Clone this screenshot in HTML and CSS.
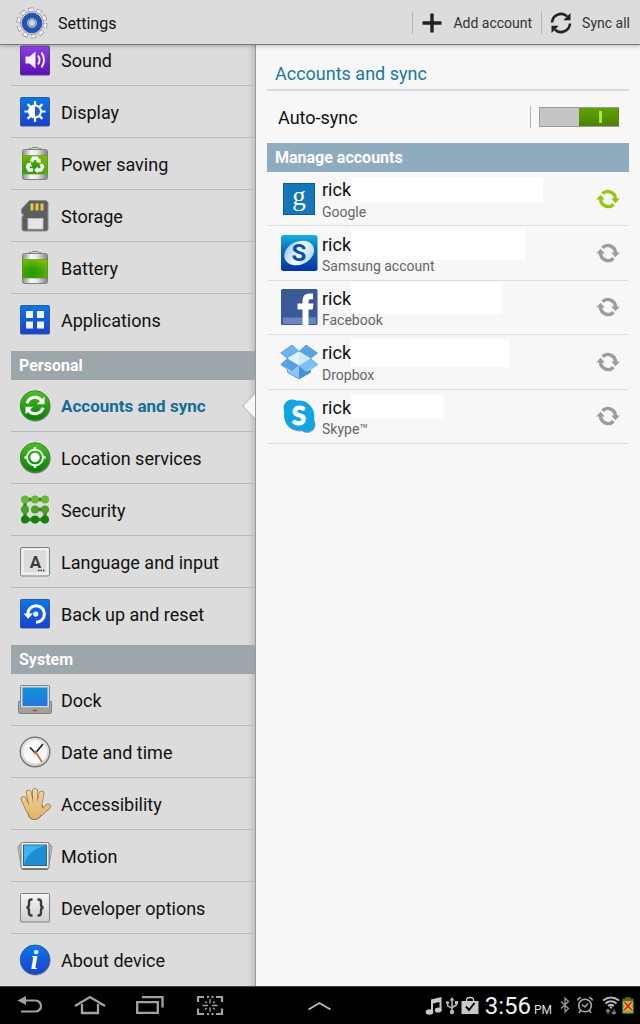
FILE: index.html
```html
<!DOCTYPE html>
<html lang="en">
<head>
<meta charset="utf-8">
<meta name="viewport" content="width=device-width, initial-scale=1">
<title>Settings</title>
<link rel="stylesheet" href="styles.css">
</head>
<body>
<svg class="defs" aria-hidden="true">
  <defs>
    <linearGradient id="blue" x1="0" y1="0" x2="0" y2="1"><stop offset="0" stop-color="#0b79e6"/><stop offset="1" stop-color="#1a3fd0"/></linearGradient>
    <linearGradient id="purple" x1="0" y1="0" x2="0" y2="1"><stop offset="0" stop-color="#8a3fe0"/><stop offset="1" stop-color="#5c0fb4"/></linearGradient>
    <linearGradient id="green" x1="0" y1="0" x2="0" y2="1"><stop offset="0" stop-color="#4fc02a"/><stop offset="1" stop-color="#057f05"/></linearGradient>
    <radialGradient id="charge" cx=".4" cy=".75" r=".85"><stop offset="0" stop-color="#1f9a0c"/><stop offset=".35" stop-color="#37a208"/><stop offset="1" stop-color="#86bf00"/></radialGradient>
    <linearGradient id="metal" x1="0" y1="0" x2="1" y2="0"><stop offset="0" stop-color="#8d8d8d"/><stop offset=".35" stop-color="#fafafa"/><stop offset=".6" stop-color="#e4e4e4"/><stop offset="1" stop-color="#7f7f7f"/></linearGradient>
    <linearGradient id="pale" x1="0" y1="0" x2="0" y2="1"><stop offset="0" stop-color="#f6f6f6"/><stop offset="1" stop-color="#cfcfcf"/></linearGradient>
    <linearGradient id="screen" x1="0" y1="0" x2="0" y2="1"><stop offset="0" stop-color="#1393d6"/><stop offset="1" stop-color="#1f78e0"/></linearGradient>
    <linearGradient id="skin" x1="0" y1="0" x2="0" y2="36" gradientUnits="userSpaceOnUse"><stop offset="0" stop-color="#f3d9a4"/><stop offset="1" stop-color="#dfae62"/></linearGradient>
    <linearGradient id="samsung" x1="0" y1="0" x2="0" y2="1"><stop offset="0" stop-color="#12b4dc"/><stop offset=".4" stop-color="#0a6cc4"/><stop offset="1" stop-color="#0635a0"/></linearGradient>
    <linearGradient id="oval" x1="0" y1="0" x2="1" y2="1"><stop offset="0" stop-color="#7fc4ee"/><stop offset=".5" stop-color="#f3faff"/><stop offset="1" stop-color="#9fd0f0"/></linearGradient>
    <symbol id="sync" viewBox="0 0 24 20">
      <path d="M6.500 4.800 A7.500 7.500 0 0 1 19.400 10.200" fill="none" stroke="currentColor" stroke-width="3.400"/>
      <path d="M15.200 9.500h8.600l-4.300 4.800z" fill="currentColor"/>
      <path d="M17.500 15.200 A7.500 7.500 0 0 1 4.600 9.800" fill="none" stroke="currentColor" stroke-width="3.400"/>
      <path d="M8.800 10.500h-8.600l4.300-4.800z" fill="currentColor"/>
    </symbol>
    <symbol id="battery" viewBox="0 0 36 36">
      <path d="M12 4V2.500h2L15 1.500h6l1 1h2V4" fill="#d5d5d5" stroke="#888"/>
      <rect x="5.500" y="3.500" width="25" height="30" rx="2" fill="url(#metal)" stroke="#808080"/>
      <rect x="5.500" y="9.500" width="25" height="18.500" fill="url(#charge)" stroke="#5c9409" stroke-width=".6"/>
    </symbol>
  </defs>
</svg>

<header class="topbar">
  <svg class="topbar-logo" viewBox="0 0 32 32" aria-hidden="true">
    <circle cx="16" cy="16" r="13.500" fill="none" stroke="#858b92" stroke-width="4" stroke-dasharray="5.200 3.280"/>
    <circle cx="16" cy="16" r="13.300" fill="none" stroke="#f4f4f4" stroke-width="3" stroke-dasharray="4.200 4.160" stroke-dashoffset="-.5"/>
    <circle cx="16" cy="16" r="11.500" fill="#e5e6e8" stroke="#9a9fa6"/>
    <circle cx="16" cy="16" r="7.300" fill="#e8edf4" stroke="#2453b2" stroke-width="5"/>
    <circle cx="16" cy="16" r="9.900" fill="none" stroke="#173d87" stroke-width=".8"/>
    <circle cx="16" cy="16" r="3.700" fill="#ced6df" stroke="#8798ae" stroke-width="1.600"/>
  </svg>
  <h1 class="topbar-title">Settings</h1>
  <button class="action" type="button">
    <svg class="action-icon" viewBox="0 0 22 22" aria-hidden="true"><path d="M11 1.500v19M1.500 11h19" stroke="#222" stroke-width="3.400"/></svg>
    Add account
  </button>
  <button class="action" type="button">
    <svg class="action-icon" viewBox="0 0 22 22" aria-hidden="true">
      <path d="M2 10.500A9 9 0 0 1 17 4.300M20 11.500A9 9 0 0 1 5 17.700" fill="none" stroke="#222" stroke-width="2.600"/>
      <path d="M20.500 1v7.200h-7.200zM1.500 21v-7.200h7.200z" fill="#222"/>
    </svg>
    Sync all
  </button>
</header>

<main class="panes">
  <nav class="sidebar" aria-label="Settings sections">
    <ul class="menu">
      <li><a class="item" href="#sound"><svg class="item-icon" viewBox="0 0 36 36"><rect x="3.500" y="4" width="29" height="29" rx="1" fill="url(#purple)" stroke="#5a3a80"/><path d="M8.500 14.500h4l6-5v17l-6-5h-4z" fill="#f3eef8"/><path d="M21 13.500q3 4.500 0 9M24.500 10.500q5 7.500 0 15" fill="none" stroke="#f3eef8" stroke-width="1.900"/></svg>Sound</a></li>
      <li><a class="item" href="#display"><svg class="item-icon" viewBox="0 0 36 36"><rect x="3.500" y="3.500" width="29" height="28.500" rx="1" fill="url(#blue)" stroke="#31589a"/><g stroke="#fff" stroke-width="2.200"><path d="M18 7v4M18 24v4M7.500 17.500h4M24.500 17.500h4M10.600 10.100l2.800 2.800M22.600 22.100l2.800 2.800M10.600 24.900l2.800-2.800M22.600 12.900l2.800-2.800"/></g><circle cx="18" cy="17.500" r="6" fill="#1d5fdb" stroke="#fff" stroke-width="2"/><path d="M18 11.500a6 6 0 0 0 0 12z" fill="#fff"/></svg>Display</a></li>
      <li><a class="item" href="#power"><svg class="item-icon" viewBox="0 0 36 36"><use href="#battery"/><g fill="none" stroke="#fff" stroke-width="3.400"><path d="M14.200 15.700l2.200-3.500h3.400l1.800 3"/><path d="M24 18l1.600 3-1.800 3h-4"/><path d="M16 24h-3.800l-1.700-3 1.600-2.800"/></g><path d="M23.500 12.500l.3 4.800-4.700-1.200zM20.800 20.500v7l-3.800-3.500zM9 18.300l4.600-2 1.200 4.600z" fill="#fff"/></svg>Power saving</a></li>
      <li><a class="item" href="#storage"><svg class="item-icon" viewBox="0 0 36 36"><path d="M12.500 2.500h16.500l2 2v27l-1.500 1.500H6.500L5 31.500V19l1.500-2-2-2v-4z" fill="#5e5e5e" stroke="#8b8b8b"/><path d="M15 5.500v7M20 5.500v7M25 5.500v7" stroke="#ecc63f" stroke-width="3"/><rect x="11" y="20.500" width="15" height="10.500" fill="#e6e6e6" stroke="#bcbcbc"/></svg>Storage</a></li>
      <li><a class="item" href="#battery-info"><svg class="item-icon" viewBox="0 0 36 36"><use href="#battery"/></svg>Battery</a></li>
      <li><a class="item" href="#applications"><svg class="item-icon" viewBox="0 0 36 36"><rect x="3.500" y="3.500" width="29" height="28.500" rx="1" fill="url(#blue)" stroke="#31589a"/><path d="M9 9h7v7H9zM20 9h7v7h-7zM9 19.500h7v7H9zM20 19.500h7v7h-7z" fill="#f1f4fb"/></svg>Applications</a></li>
    </ul>
    <h2 class="section-title">Personal</h2>
    <ul class="menu">
      <li><a class="item item-active" href="#accounts" aria-current="page"><svg class="item-icon" viewBox="0 0 36 36"><circle cx="18.300" cy="18.300" r="15.300" fill="#777"/><circle cx="18" cy="17.500" r="14.700" fill="url(#green)" stroke="#3b8a2a"/><path d="M10 15.300A8.300 8.300 0 0 1 24.500 12.500M26 19.700A8.300 8.300 0 0 1 11.500 22.500" fill="none" stroke="#fff" stroke-width="3"/><path d="M27.500 8.800v7.400h-7.700zM8.500 26.200v-7.400h7.700z" fill="#fff"/></svg>Accounts and sync<svg class="pointer" viewBox="0 0 13 28" aria-hidden="true"><path d="M13 .5L1 12.500q-1 1.500 0 3L13 27.500z" fill="#f7f7f7"/><path d="M13 .5L1 12.500q-1 1.500 0 3L13 27.500" fill="none" stroke="#aaa"/></svg></a></li>
      <li><a class="item" href="#location"><svg class="item-icon" viewBox="0 0 36 36"><circle cx="18.300" cy="18.300" r="15.300" fill="#777"/><circle cx="18" cy="17.500" r="14.700" fill="url(#green)" stroke="#3b8a2a"/><circle cx="18" cy="17.500" r="8" fill="none" stroke="#fff" stroke-width="1.800"/><circle cx="18" cy="17.500" r="4.700" fill="#fff"/><path d="M18 7v3.500M18 24.500V28M7.500 17.500H11M25 17.500h3.500" stroke="#fff" stroke-width="2.400"/></svg>Location services</a></li>
      <li><a class="item" href="#security"><svg class="item-icon" viewBox="0 0 36 36"><path d="M28 7.500H8v20h20v-10H18" fill="none" stroke="#318a1c" stroke-width="3.400"/><g fill="#4a9f27"><circle cx="8" cy="7.500" r="4" fill="#68b92f"/><circle cx="18" cy="7.500" r="4" fill="#68b92f"/><circle cx="28" cy="7.500" r="4" fill="#68b92f"/><circle cx="8" cy="17.500" r="4"/><circle cx="18" cy="17.500" r="4"/><circle cx="28" cy="17.500" r="4"/><circle cx="8" cy="27.500" r="4" fill="#128009"/><circle cx="18" cy="27.500" r="4" fill="#128009"/><circle cx="28" cy="27.500" r="4" fill="#128009"/></g></svg>Security</a></li>
      <li><a class="item" href="#language"><svg class="item-icon" viewBox="0 0 36 36"><rect x="3.500" y="3.500" width="29" height="28.500" rx="1.500" fill="#e9e9e9" stroke="#808080"/><rect x="6" y="5.500" width="24" height="23.500" fill="#dcdcdc" stroke="#f8f8f8"/><text class="glyph" x="18.500" y="23.500" font-size="17" fill="#3c3c3c">A</text><path d="M21 26.500h7" stroke="#333" stroke-width="1.500" stroke-dasharray="1.500 1"/></svg>Language and input</a></li>
      <li><a class="item" href="#backup"><svg class="item-icon" viewBox="0 0 36 36"><rect x="3.500" y="3.500" width="29" height="28.500" rx="1" fill="url(#blue)" stroke="#31589a"/><path d="M10.800 18A8.300 8.300 0 1 1 19 26.300" fill="none" stroke="#fff" stroke-width="3"/><path d="M6.500 17.500h9.500l-4.800 5.300z" fill="#fff"/><circle cx="18.800" cy="18" r="2.600" fill="#fff"/></svg>Back up and reset</a></li>
    </ul>
    <h2 class="section-title">System</h2>
    <ul class="menu">
      <li><a class="item" href="#dock"><svg class="item-icon" viewBox="0 0 36 36"><path d="M1.500 19.500h4v-1h25v1h4v11l-1 1h-31l-1-1z" fill="#aaa" stroke="#808080"/><rect x="3.500" y="3.500" width="29" height="22.500" rx="1" fill="#d9d9d9" stroke="#858585"/><rect x="5.500" y="5.500" width="25" height="18.500" fill="url(#screen)"/><path d="M2 26.500h32v4.500H2z" fill="#a0a0a0"/><path d="M16 28.500h4" stroke="#b8382a" stroke-width="1.400"/></svg>Dock</a></li>
      <li><a class="item" href="#date"><svg class="item-icon" viewBox="0 0 36 36"><circle cx="18" cy="18" r="14.800" fill="url(#pale)" stroke="#777" stroke-width="1.400"/><circle cx="18" cy="17.700" r="12.500" fill="#f7f7f7" stroke="#d5d5d5"/><path d="M13 13.500l5.500 5.500 7.500-9" fill="none" stroke="#222" stroke-width="1.700"/><path d="M18 17l7 11" stroke="#d9622b" stroke-width="1.600"/><circle cx="18" cy="18.300" r="1.500" fill="#d9622b"/></svg>Date and time</a></li>
      <li><a class="item" href="#accessibility"><svg class="item-icon" viewBox="0 0 36 36">
        <g fill="none" stroke="#8a7044" stroke-width="5.600" stroke-linecap="round" stroke-linejoin="round"><path d="M6.500 13l5 11M11.800 6.500l2.700 14M18 5l.3 14M24.500 7.500L22 20M31 20.500L24 27"/></g>
        <path d="M10.500 20L24.500 18l3 6-3.500 6q-2 3.500-7 3.500-5 0-6-6z" fill="#8a7044" stroke="#8a7044"/>
        <g fill="none" stroke="url(#skin)" stroke-width="4.300" stroke-linecap="round" stroke-linejoin="round"><path d="M6.500 13l5 11M11.800 6.500l2.700 14M18 5l.4 14M24.500 7.500L22 20M31 20.500L24 27"/></g>
        <path d="M10.500 20L24 18.500l2.500 6-3.300 5.500q-2 3-6.200 3-4.500 0-5.500-5.500z" fill="url(#skin)"/></svg>Accessibility</a></li>
      <li><a class="item" href="#motion"><svg class="item-icon" viewBox="0 0 36 36"><path d="M.8 8.500l4-1.500v24zM35.200 8.500l-4-1.500v24z" fill="#eee" stroke="#8f8f8f"/><path d="M2.500 6.500l2-1v25zM33.500 6.500l-2-1v25z" fill="#ddd" stroke="#999"/><rect x="4" y="4.500" width="28" height="26" rx="1.500" fill="#f0f0f0" stroke="#7f7f7f"/><path d="M5 31.500h26" stroke="#777"/><rect x="6.500" y="7" width="23" height="20.500" fill="#1b8ed6" stroke="#25689b"/><path d="M7 26V7.500h22Q12 11 7 26z" fill="#42b3ee"/></svg>Motion</a></li>
      <li><a class="item" href="#developer"><svg class="item-icon" viewBox="0 0 36 36"><rect x="3.500" y="3.500" width="29" height="28.500" rx="1" fill="url(#pale)" stroke="#808080"/><path d="M15.500 9.500h-1q-2.500 0-2.500 2.500v2.500q0 2.800-2.500 3 2.500.2 2.500 3V23q0 2.500 2.500 2.500h1M20.500 9.500h1q2.500 0 2.500 2.500v2.500q0 2.800 2.500 3-2.500.2-2.500 3V23q0 2.500-2.500 2.500h-1" fill="none" stroke="#3b3b3b" stroke-width="2.400"/></svg>Developer options</a></li>
      <li><a class="item" href="#about"><svg class="item-icon" viewBox="0 0 36 36"><circle cx="18.300" cy="18.300" r="15.300" fill="#888"/><circle cx="18" cy="17.700" r="14.700" fill="url(#blue)" stroke="#2b5aa6"/><text class="glyph-serif" x="17.500" y="26.500" font-size="28" fill="#fff">i</text></svg>About device</a></li>
    </ul>
  </nav>

  <section class="detail">
    <h2 class="detail-title">Accounts and sync</h2>
    <div class="setting">
      <label for="auto-sync">Auto-sync</label>
      <span class="setting-control"><input class="toggle" id="auto-sync" type="checkbox" role="switch" checked></span>
    </div>
    <h3 class="accounts-title">Manage accounts</h3>
    <ul class="accounts">
      <li><a class="account" href="#google">
        <svg class="account-icon" viewBox="0 0 38 38"><rect x="3.500" y="3.500" width="31" height="31" fill="#1577bb" stroke="#0c5f9b"/><text class="glyph-book" x="19" y="25" font-size="27" fill="#fff">g</text></svg>
        <span class="account-text"><span class="account-name">rick<span class="mask mask-google"></span></span><span class="account-type">Google</span></span>
        <svg class="sync-state sync-on"><use href="#sync"/></svg></a></li>
      <li><a class="account" href="#samsung-account">
        <svg class="account-icon" viewBox="0 0 38 38"><rect x="1" y="1" width="36.500" height="36" rx="2.500" fill="url(#samsung)"/><ellipse cx="19.200" cy="19" rx="15.500" ry="11.500" transform="rotate(-25 19.200 19)" fill="url(#oval)"/><text class="glyph" x="19" y="27" font-size="24" fill="#0b4fae">S</text></svg>
        <span class="account-text"><span class="account-name">rick<span class="mask mask-samsung"></span></span><span class="account-type">Samsung account</span></span>
        <svg class="sync-state"><use href="#sync"/></svg></a></li>
      <li><a class="account" href="#facebook">
        <svg class="account-icon" viewBox="0 0 38 38"><rect x="1" y="1" width="36.500" height="36" rx="1.500" fill="#3b5998"/><path d="M3 29.500h33V36H3z" fill="#6c86bd"/><path d="M22.500 37V21.500h-5v-6h5v-3q0-7 7-7H33v5.800h-2.500q-2 0-2 2v2.200h5l-.8 6h-4.200V37z" fill="#fff"/></svg>
        <span class="account-text"><span class="account-name">rick<span class="mask mask-facebook"></span></span><span class="account-type">Facebook</span></span>
        <svg class="sync-state"><use href="#sync"/></svg></a></li>
      <li><a class="account" href="#dropbox">
        <svg class="account-icon" viewBox="0 0 38 38"><path d="M12 2l7 6.500-11.500 7L.8 10z" fill="#6fb4ee"/><path d="M26 2l-7 6.500 11.500 7L37.500 10z" fill="#5aa2e4"/><path d="M7.500 15.500L19 8.500l11.500 7L19 22.500z" fill="#e3f3ff"/><path d="M19 8.500l11.500 7L19 22.500z" fill="#cce8fd"/><path d="M.8 21.500l6.700-6 11.500 7-7 6z" fill="#55a0e6"/><path d="M37.500 21.500l-7-6-11.500 7 7 6z" fill="#7cc0f5"/><path d="M7.500 26.500v3L19 36V22.500l-7 6z" fill="#8bc6f4"/><path d="M30.500 26.500v3L19 36V22.500l7 6z" fill="#4691dc"/><path d="M12 2l7 6.500L26 2l11.500 8-7 5.500 7 6-7 5v3L19 36 7.500 29.500v-3l-6.700-5 6.700-6L.8 10z" fill="none" stroke="#4189cc" stroke-width=".7"/></svg>
        <span class="account-text"><span class="account-name">rick<span class="mask mask-dropbox"></span></span><span class="account-type">Dropbox</span></span>
        <svg class="sync-state"><use href="#sync"/></svg></a></li>
      <li><a class="account" href="#skype">
        <svg class="account-icon" viewBox="0 0 38 38"><g fill="#999" transform="translate(.5 1)"><circle cx="19" cy="18.500" r="15"/><circle cx="12" cy="11" r="8.500"/><circle cx="26.500" cy="26.500" r="8.500"/></g><g fill="#12a5e4"><circle cx="19" cy="18.500" r="15"/><circle cx="12" cy="11" r="8.500"/><circle cx="26.500" cy="26.500" r="8.500"/></g><text class="glyph-round" x="19" y="27.500" font-size="26" fill="#fff" stroke="#fff" stroke-width=".8">S</text></svg>
        <span class="account-text"><span class="account-name">rick<span class="mask mask-skype"></span></span><span class="account-type">Skype™</span></span>
        <svg class="sync-state"><use href="#sync"/></svg></a></li>
    </ul>
  </section>
</main>

<footer class="navbar">
  <div class="nav-keys">
    <button class="key" type="button" aria-label="Back"><svg viewBox="0 0 32 24"><path d="M9 6.500h12.500a5.200 5.200 0 0 1 0 11H7" fill="none" stroke="#a2a2a2" stroke-width="2.200"/><path d="M3.500 6.500L12 2v9z" fill="#a2a2a2"/></svg></button>
    <button class="key" type="button" aria-label="Home"><svg viewBox="0 0 32 24"><path d="M1 12L16 3l15 9M8 10v9h16v-9" fill="none" stroke="#a2a2a2" stroke-width="2.300"/></svg></button>
    <button class="key" type="button" aria-label="Recent apps"><svg viewBox="0 0 32 24"><path d="M3.200 8.200h20.600v10.600H3.200zM8 3.200h20.500v10.300" fill="none" stroke="#a2a2a2" stroke-width="2.300"/></svg></button>
    <button class="key" type="button" aria-label="Screenshot"><svg viewBox="0 0 32 24"><path d="M4 8V3h6M13 3h2M17.500 3h2M22 3h6v5M4 14.500V20h6M13 20h2M17.500 20h2M22 20h6v-5.500" fill="none" stroke="#a2a2a2" stroke-width="2.200"/><path d="M16 5v4.500M16 13.500V18M8.500 11.500H14M18 11.500h5.500M11 7.500l2 1.500M21 7.500L19 9M11 15.500l2-1.500M21 15.500L19 14" stroke="#a2a2a2" stroke-width="1.300"/></svg></button>
  </div>
  <button class="key key-up" type="button" aria-label="Open tray"><svg viewBox="0 0 32 24"><path d="M4.500 15.500L15.500 9l11 6.500" fill="none" stroke="#bbb" stroke-width="1.800"/></svg></button>
  <div class="status">
    <svg class="status-icon" viewBox="0 0 18 20"><path d="M6 3.500L16.500 1v13.500h-2V6L8 7.500v9H6z" fill="#c8c8c8"/><ellipse cx="4.500" cy="16" rx="3.800" ry="2.700" fill="#c8c8c8"/><ellipse cx="13.200" cy="14" rx="3.400" ry="2.600" fill="#c8c8c8"/></svg>
    <svg class="status-icon status-narrow" viewBox="0 0 14 20"><path d="M7 3v12M2.500 7v2.500L7 12.500M11.500 7v2L7 11.500" fill="none" stroke="#bbb" stroke-width="1.500"/><path d="M4.500 4.500L7 1l2.500 3.500z" fill="#bbb"/><circle cx="7" cy="16" r="2.200" fill="#bbb"/><circle cx="2.500" cy="6.500" r="1.600" fill="#bbb"/><path d="M10 5h3v3h-3z" fill="#bbb"/></svg>
    <svg class="status-icon" viewBox="0 0 18 20"><path d="M5.500 5.500V4Q5.500 1.500 9 1.500T12.500 4v1.500" fill="none" stroke="#c8c8c8" stroke-width="1.300"/><path d="M.5 5h17v13H.5z" fill="#c8c8c8"/><path d="M5 10.500l3 3.500 5.500-7" fill="none" stroke="#000" stroke-width="2"/></svg>
    <span class="time"><time class="clock">3:56</time><span class="meridiem">PM</span></span>
    <svg class="status-icon status-bluetooth" viewBox="0 0 10 20"><path d="M1 5.500l7.500 7L5 16V2l3.500 3.500L1 12.500" fill="none" stroke="#999" stroke-width="1.300"/></svg>
    <svg class="status-icon status-alarm" viewBox="0 0 18 20"><circle cx="9" cy="9.500" r="6.300" fill="none" stroke="#aaa" stroke-width="1.600"/><path d="M6 8.500L9 11l3-3.500M4.500 14.500L3 17M13.500 14.500l1.500 2.500M1.500 4.500Q2 2 5 1.500M16.500 4.500Q16 2 13 1.500" fill="none" stroke="#aaa" stroke-width="1.500"/></svg>
    <svg class="status-icon" viewBox="0 0 18 20"><path d="M1 4.500Q9-1.500 17 4.500M3.500 7.300q5.500-4 11 0M6 10q3-2.200 6 0" fill="none" stroke="#b5b5b5" stroke-width="2.100"/><circle cx="9" cy="11.500" r="1.200" fill="#b5b5b5"/><path d="M6 18v-4.500M4 15.500l2-2 2 2M12 13.500V18M10 16l2 2 2-2" fill="none" stroke="#888" stroke-width="1.300"/></svg>
    <svg class="status-icon status-battery" viewBox="0 0 12 20"><path d="M3.500 1h5v2h-5zM.5 2.500h11V6H.5z" fill="#536c20"/><path d="M.5 5h11v12.500H.5z" fill="#8aaf16"/><path d="M2.500 6l7 8M9.500 6l-7 8" stroke="#f2e3cc" stroke-width="3.600"/><path d="M2.500 6l7 8M9.500 6l-7 8" stroke="#e1341c" stroke-width="2.400"/></svg>
  </div>
</footer>
</body>
</html>
```
FILE: styles.css
```css
* {
  box-sizing: border-box;
}

body {
  display: flex;
  flex-direction: column;
  height: 100vh;
  margin: 0;
  background: #f7f7f7;
  color: #111;
  font-family: Roboto, "Liberation Sans", sans-serif;
}

h1, h2, h3, ul {
  margin: 0;
  padding: 0;
  font-weight: 400;
}

ul {
  list-style: none;
}

a {
  color: inherit;
  text-decoration: none;
}

button {
  padding: 0;
  border: 0;
  background: none;
  color: inherit;
  font: inherit;
}

svg {
  flex: none;
}

.defs {
  position: absolute;
  width: 0;
  height: 0;
}

/* Top bar */
.topbar {
  position: relative;
  display: flex;
  flex: none;
  align-items: center;
  height: 45px;
  padding: 2px 10px 0 16px;
  border-bottom: 1px solid #777;
  background: #dcdcdc;
  box-shadow: 0 1px 4px rgba(0, 0, 0, 0.25);
}

.topbar-logo {
  width: 32px;
  height: 32px;
}

.topbar-title {
  flex: 1;
  padding-left: 10px;
  font-size: 16px;
}

.action {
  display: flex;
  gap: 10px;
  align-items: center;
  height: 22px;
  margin-left: 9px;
  padding-left: 8px;
  border-left: 1px solid #b5b5b5;
  color: #333;
  font-size: 14px;
  white-space: nowrap;
}

.action-icon {
  width: 22px;
  height: 22px;
}

/* Two panes */
.panes {
  display: grid;
  flex: 1;
  grid-template-columns: 2fr 3fr;
  min-height: 0;
}

/* The list is scrolled to its end, so its top runs under the bar */
.sidebar {
  display: flex;
  flex-direction: column;
  justify-content: flex-end;
  min-width: 0;
  padding-left: 11px;
  overflow: hidden;
  border-right: 1px solid #999;
  background: linear-gradient(to left, #c2c2c2, #dcdcdc 7px);
}

.menu li {
  height: 52px;
  border-bottom: 1px solid #bababa;
}

.menu li:last-child {
  border-bottom: 0;
}

.item {
  position: relative;
  display: flex;
  gap: 8px;
  align-items: center;
  height: 51px;
  padding: 1px 0 0 6px;
  font-size: 18px;
  white-space: nowrap;
}

.item-icon {
  width: 36px;
  height: 36px;
}

.item-active {
  color: #146d98;
  font-size: 17px;
  font-weight: 700;
}

.pointer {
  position: absolute;
  top: 12px;
  right: -1px;
  width: 13px;
  height: 28px;
}

.section-title {
  margin-top: 5px;
  padding-left: 8px;
  background: #9da6ab;
  color: #fff;
  font-size: 16px;
  font-weight: 700;
  line-height: 29px;
}

.glyph, .glyph-serif, .glyph-book, .glyph-round {
  font-family: Roboto, sans-serif;
  font-weight: 700;
  text-anchor: middle;
}

.glyph-serif {
  font-family: "Liberation Serif", serif;
  font-style: italic;
}

.glyph-book {
  font-family: "Liberation Serif", serif;
  font-weight: 400;
}

.glyph-round {
  font-family: Lato, sans-serif;
  font-weight: 900;
}

/* Detail pane */
.detail {
  min-width: 0;
  padding: 14px 11px 0;
}

.detail-title {
  padding-left: 8px;
  border-bottom: 2px solid #d3dade;
  color: #1c789f;
  font-size: 18px;
  line-height: 30px;
}

.setting {
  display: flex;
  align-items: center;
  justify-content: space-between;
  height: 52px;
  padding: 0 10px 0 11px;
  font-size: 18px;
}

.setting-control {
  display: flex;
  align-items: center;
  height: 22px;
  padding-left: 8px;
  border-left: 1px solid #b5b5b5;
}

.toggle {
  width: 80px;
  height: 20px;
  margin: 0;
  border: 1px solid #9b9b9b;
  border-radius: 1px;
  background: #c5c5c5;
  appearance: none;
}

.toggle:checked {
  border-right-color: #5a8410;
  background:
    linear-gradient(#a6e83c, #a6e83c) 59px 50% / 3px 12px no-repeat,
    linear-gradient(#62a303, #4d8103) right / 39px 100% no-repeat,
    #c5c5c5;
}

.accounts-title {
  padding-left: 8px;
  background: #8facbf;
  color: #fff;
  font-size: 16px;
  font-weight: 700;
  line-height: 29px;
}

.accounts {
  display: grid;
  grid-auto-rows: 1fr;
  min-height: 272px;
}

.accounts li {
  display: grid;
  border-bottom: 1px solid #dedede;
}

.account {
  display: flex;
  gap: 4px;
  align-items: center;
  padding: 0 9px 0 13px;
}

.account-icon {
  width: 38px;
  height: 38px;
}

.account-text {
  display: flex;
  flex: 1;
  flex-direction: column;
  min-width: 0;
  padding-top: 2px;
}

.account-name {
  display: flex;
  align-items: center;
  height: 24px;
  font-size: 18px;
}

.account-type {
  position: relative;
  color: #666;
  font-size: 14px;
  line-height: 20px;
}

.mask {
  flex: none;
  background: #fff;
}

.mask-google {
  width: 192px;
  height: 26px;
}

.mask-samsung {
  width: 174px;
  height: 32px;
}

.mask-facebook {
  width: 151px;
  height: 32px;
}

.mask-dropbox {
  width: 158px;
  height: 28px;
}

.mask-skype {
  width: 93px;
  height: 24px;
}

.sync-state {
  width: 24px;
  height: 20px;
  color: #9c9c9c;
}

.sync-on {
  color: #96c70c;
}

/* System bar */
.navbar {
  display: grid;
  flex: none;
  grid-template-columns: 1fr auto 1fr;
  align-items: center;
  height: 38px;
  border-top: 1px solid #2c4650;
  background: #000;
}

.nav-keys {
  display: flex;
  gap: 28px;
  padding-left: 14px;
}

.key {
  width: 32px;
  height: 24px;
}

.key svg {
  display: block;
  width: 32px;
  height: 24px;
}

.status {
  display: flex;
  gap: 2px;
  align-items: center;
  justify-content: flex-end;
  padding-right: 6px;
}

.status-icon {
  width: 18px;
  height: 20px;
}

.status-narrow {
  width: 14px;
}

.status-bluetooth {
  width: 10px;
  margin-right: 4px;
}

.status-battery {
  width: 12px;
}

.status-alarm {
  margin-right: 6px;
}

.time {
  display: flex;
  gap: 3px;
  align-items: baseline;
  padding: 0 6px 0 4px;
}

.clock {
  color: #f2f2f2;
  font-size: 24px;
}

.meridiem {
  color: #ddd;
  font-size: 12px;
}
```
